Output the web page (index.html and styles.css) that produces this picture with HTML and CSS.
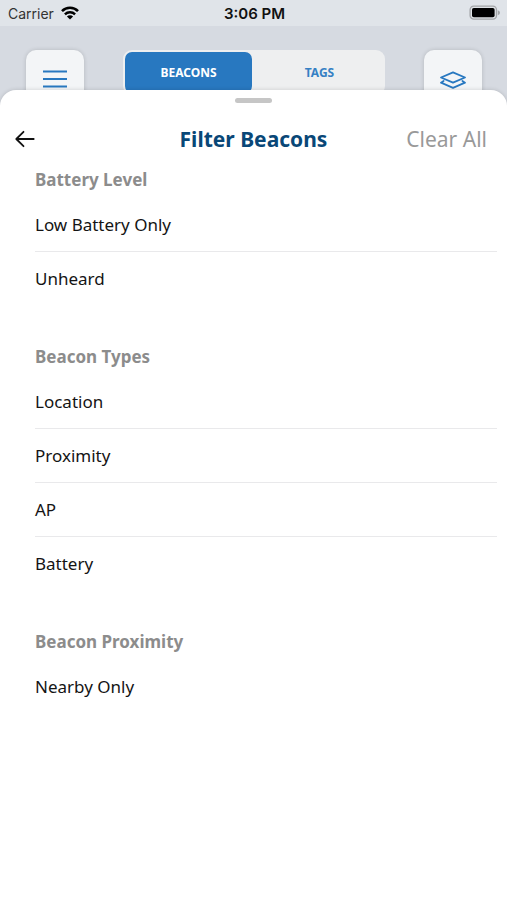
FILE: index.html
```html
<!DOCTYPE html>
<html lang="en">
<head>
<meta charset="utf-8">
<meta name="viewport" content="width=device-width, initial-scale=1">
<title>Filter Beacons</title>
<link rel="stylesheet" href="styles.css">
</head>
<body>
<div class="app">
  <div class="status-bar">
    <div class="carrier">
      <span>Carrier</span>
      <svg class="wifi" viewBox="0 0 18 14" aria-hidden="true">
        <path d="M1 5.1a11.3 11.3 0 0 1 16 0" fill="none" stroke="#000" stroke-width="2.6"/>
        <path d="M3.9 8.3a7.2 7.2 0 0 1 10.2 0" fill="none" stroke="#000" stroke-width="2.4"/>
        <path d="M9 13.6 5.9 10.5a4.4 4.4 0 0 1 6.2 0z" fill="#000"/>
      </svg>
    </div>
    <span class="time">3:06 PM</span>
    <svg class="battery" viewBox="0 0 32 16" aria-hidden="true">
      <rect x="1.1" y="1.1" width="26.4" height="13" rx="3.6" fill="#dfe2e6" stroke="#a3a5a8" stroke-width="1.3"/>
      <rect x="3" y="3" width="22.6" height="9.3" rx="1.8" fill="#000"/>
      <path d="M28.8 5.2q2.2.9 2.2 2.5t-2.2 2.5z" fill="#a3a5a8"/>
    </svg>
  </div>

  <div class="toolbar">
    <button class="tool" type="button" aria-label="Menu">
      <svg viewBox="0 0 26 20" aria-hidden="true"><path d="M1 2.5h24M1 10h24M1 17.5h24" fill="none" stroke="#2878c0" stroke-width="1.9"/></svg>
    </button>
    <div class="tabs">
      <button class="tab tab-active" type="button">BEACONS</button>
      <button class="tab" type="button">TAGS</button>
    </div>
    <button class="tool" type="button" aria-label="Layers">
      <svg viewBox="0 0 26 20" aria-hidden="true">
        <g fill="none" stroke="#2878c0" stroke-width="1.8" stroke-linejoin="round" stroke-linecap="round">
          <path d="M13 3.4 25 8.5 13 13.6 1 8.5z"/>
          <path d="M3.6 12 1 13.7l12 5.1 12-5.1-2.6-1.7"/>
        </g>
      </svg>
    </button>
  </div>

  <main class="sheet">
    <div class="handle"></div>
    <header class="sheet-header">
      <button class="back" type="button" aria-label="Back">
        <svg viewBox="0 0 20 18" aria-hidden="true"><path d="M8.5 1.8 1.3 9l7.2 7.2M1.5 9h17.2" fill="none" stroke="#111" stroke-width="1.8" stroke-linecap="round" stroke-linejoin="round"/></svg>
      </button>
      <h1>Filter Beacons</h1>
      <button class="clear" type="button">Clear All</button>
    </header>

    <section class="group">
      <h2>Battery Level</h2>
      <ul>
        <li><button type="button">Low Battery Only</button></li>
        <li><button type="button">Unheard</button></li>
      </ul>
    </section>
    <section class="group">
      <h2>Beacon Types</h2>
      <ul>
        <li><button type="button">Location</button></li>
        <li><button type="button">Proximity</button></li>
        <li><button type="button">AP</button></li>
        <li><button type="button">Battery</button></li>
      </ul>
    </section>
    <section class="group">
      <h2>Beacon Proximity</h2>
      <ul>
        <li><button type="button">Nearby Only</button></li>
      </ul>
    </section>
  </main>
</div>
</body>
</html>
```
FILE: styles.css
```css
* {
  box-sizing: border-box;
}

body {
  margin: 0;
  background: #d6dae1;
  color: #141414;
  font-family: "Noto Sans", "Open Sans", sans-serif;
}

button {
  margin: 0;
  padding: 0;
  border: 0;
  background: none;
  color: inherit;
  font: inherit;
  cursor: pointer;
}

svg {
  display: block;
}

h1,
h2,
ul {
  margin: 0;
  padding: 0;
}

.app {
  display: flex;
  flex-direction: column;
  min-height: 100vh;
}

.status-bar {
  display: grid;
  grid-template-columns: 1fr auto 1fr;
  align-items: center;
  height: 26px;
  padding: 0 6px 0 8px;
  background: #e0e4e9;
  font-family: Inter, sans-serif;
  font-size: 14px;
}

.carrier {
  display: flex;
  align-items: center;
  gap: 7px;
  color: #333;
}

.wifi {
  width: 18px;
  height: 14px;
}

.time {
  color: #111;
  font-size: 15px;
  font-weight: 600;
}

.battery {
  justify-self: end;
  width: 32px;
  height: 16px;
}

.toolbar {
  display: grid;
  grid-template-columns: 58px 1fr 58px;
  gap: 39px;
  padding: 24px 25px 0 26px;
}

.tool {
  display: flex;
  align-items: center;
  justify-content: center;
  height: 58px;
  border-radius: 10px;
  background: #f3f5f7;
  box-shadow: 0 0 4px rgba(0, 0, 0, 0.16);
}

.tool svg {
  width: 26px;
  height: 20px;
}

.tabs {
  display: grid;
  grid-template-columns: 1fr 1fr;
  gap: 4px;
  height: 45px;
  padding: 2px;
  border-radius: 9px;
  background: #eeeff0;
}

.tab {
  border-radius: 7px;
  color: #3580c4;
  font-size: 12px;
  font-weight: 700;
}

.tab-active {
  background: #2878c0;
  color: #fff;
}

.sheet {
  position: relative;
  flex: 1;
  margin-top: -18px;
  padding-top: 8px;
  border-radius: 16px 16px 0 0;
  background: #fff;
  box-shadow: 0 0 4px rgba(0, 0, 0, 0.16);
}

.handle {
  width: 37px;
  height: 5px;
  margin: 0 auto;
  border-radius: 3px;
  background: #c6c6c6;
}

.sheet-header {
  display: grid;
  grid-template-columns: 1fr auto 1fr;
  align-items: center;
  height: 48px;
  margin-top: 12px;
  padding: 0 20px;
}

.back {
  justify-self: start;
  margin-left: -5px;
}

.back svg {
  width: 20px;
  height: 18px;
}

h1 {
  color: #094777;
  font-size: 21px;
  font-weight: 700;
}

.clear {
  justify-self: end;
  color: #999;
  font-size: 21px;
}

.group {
  padding: 0 10px 0 35px;
}

.group + .group {
  margin-top: 35px;
}

h2 {
  color: #8c8c8c;
  font-size: 17px;
  font-weight: 700;
  line-height: 34px;
}

ul {
  list-style: none;
}

li + li {
  border-top: 1px solid #e9e9eb;
}

li button {
  display: block;
  width: 100%;
  height: 54px;
  font-size: 17px;
  text-align: left;
}

li + li button {
  height: 53px;
}
```
